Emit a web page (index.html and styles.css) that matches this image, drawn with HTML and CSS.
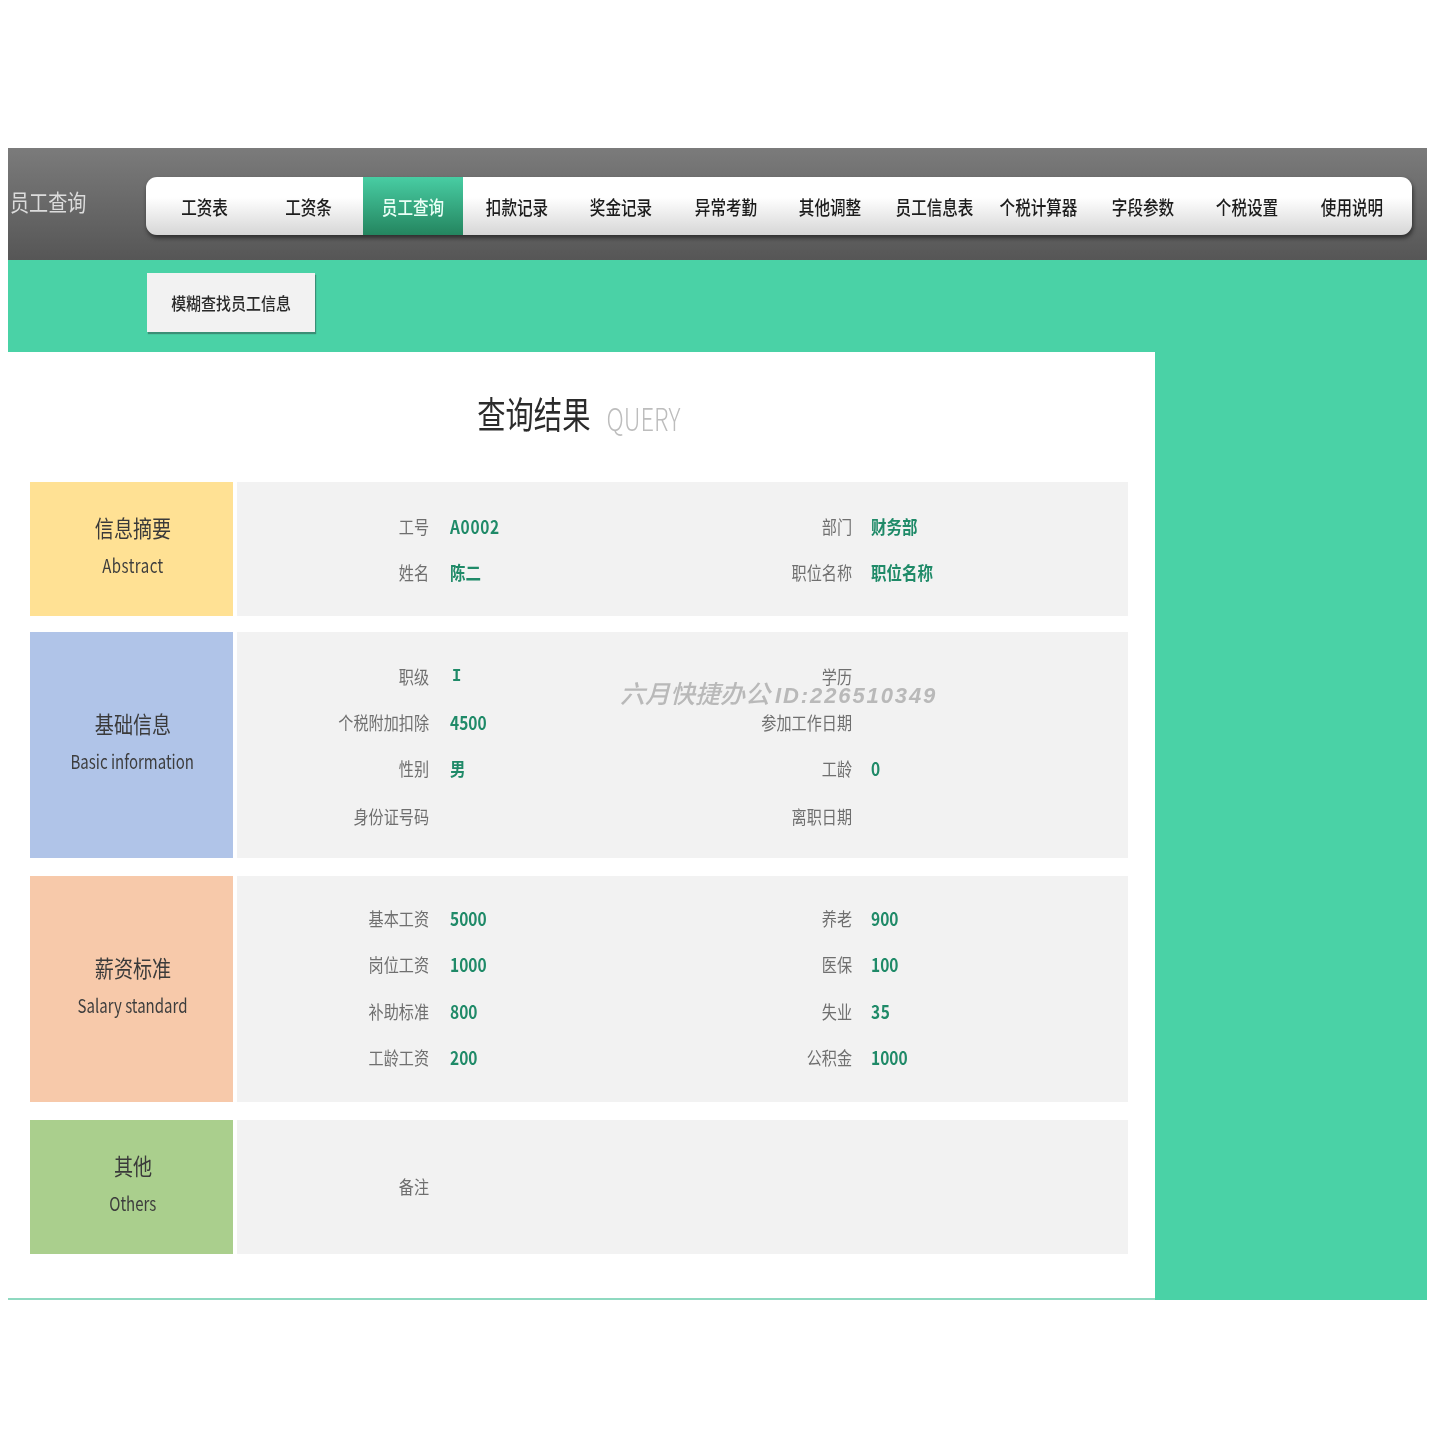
FILE: index.html
```html
<!DOCTYPE html>
<html lang="zh-CN">
<head>
<meta charset="utf-8">
<title>员工查询</title>
<link rel="stylesheet" href="styles.css">
</head>
<body>
<div class="sheet">
  <header class="topbar">
    <div class="page-name"><span>员工查询</span></div>
    <nav class="tabs">
      <a class="tab"><span>工资表</span></a>
      <a class="tab"><span>工资条</span></a>
      <a class="tab active"><span>员工查询</span></a>
      <a class="tab"><span>扣款记录</span></a>
      <a class="tab"><span>奖金记录</span></a>
      <a class="tab"><span>异常考勤</span></a>
      <a class="tab"><span>其他调整</span></a>
      <a class="tab"><span>员工信息表</span></a>
      <a class="tab"><span>个税计算器</span></a>
      <a class="tab"><span>字段参数</span></a>
      <a class="tab"><span>个税设置</span></a>
      <a class="tab"><span>使用说明</span></a>
    </nav>
  </header>
  <div class="toolbar">
    <button class="search-btn"><span>模糊查找员工信息</span></button>
  </div>
  <main class="body-area">
    <section class="panel">
      <h1 class="heading"><span class="heading-inner"><span class="heading-cn">查询结果</span><span class="heading-en">QUERY</span></span></h1>

      <div class="row row-first">
        <div class="side side-yellow"><div class="side-cn"><span>信息摘要</span></div><div class="side-en"><span class="en-loose">Abstract</span></div></div>
        <div class="fields fields-short">
          <div class="k"><span>工号</span></div><div class="v"><span class="wide">A0002</span></div><div class="k"><span>部门</span></div><div class="v v-right"><span>财务部</span></div>
          <div class="k"><span>姓名</span></div><div class="v"><span>陈二</span></div><div class="k"><span>职位名称</span></div><div class="v v-right"><span>职位名称</span></div>
        </div>
      </div>

      <div class="row">
        <div class="side side-blue"><div class="side-cn"><span>基础信息</span></div><div class="side-en"><span>Basic information</span></div></div>
        <div class="fields fields-basic">
          <div class="k"><span>职级</span></div><div class="v"><span class="serif-i">I</span></div><div class="k"><span>学历</span></div><div class="v v-right"></div>
          <div class="k"><span>个税附加扣除</span></div><div class="v"><span>4500</span></div><div class="k"><span>参加工作日期</span></div><div class="v v-right"></div>
          <div class="k"><span>性别</span></div><div class="v"><span>男</span></div><div class="k"><span>工龄</span></div><div class="v v-right"><span>0</span></div>
          <div class="k"><span>身份证号码</span></div><div class="v"></div><div class="k"><span>离职日期</span></div><div class="v v-right"></div>
          <div class="watermark">六月快捷办公<span class="watermark-id">ID:226510349</span></div>
        </div>
      </div>

      <div class="row row-spaced">
        <div class="side side-orange"><div class="side-cn"><span>薪资标准</span></div><div class="side-en"><span>Salary standard</span></div></div>
        <div class="fields fields-salary">
          <div class="k"><span>基本工资</span></div><div class="v"><span>5000</span></div><div class="k"><span>养老</span></div><div class="v v-right"><span>900</span></div>
          <div class="k"><span>岗位工资</span></div><div class="v"><span>1000</span></div><div class="k"><span>医保</span></div><div class="v v-right"><span>100</span></div>
          <div class="k"><span>补助标准</span></div><div class="v"><span>800</span></div><div class="k"><span>失业</span></div><div class="v v-right"><span class="wide">35</span></div>
          <div class="k"><span>工龄工资</span></div><div class="v"><span>200</span></div><div class="k"><span>公积金</span></div><div class="v v-right"><span>1000</span></div>
        </div>
      </div>

      <div class="row row-spaced">
        <div class="side side-green"><div class="side-cn"><span>其他</span></div><div class="side-en"><span>Others</span></div></div>
        <div class="fields fields-short fields-single">
          <div class="k"><span>备注</span></div><div class="v"></div><div class="k"></div><div class="v v-right"></div>
        </div>
      </div>
    </section>
  </main>
</div>
</body>
</html>
```
FILE: styles.css
```css
* { box-sizing: border-box; }
html, body { margin: 0; background: #fff; }
body {
  height: 1440px;
  padding: 148px 0 0 8px;
  font-family: "Noto Sans CJK SC", "Noto Sans", sans-serif;
}
.sheet { width: 1419px; filter: blur(0.45px); }

.topbar {
  height: 112px;
  display: flex;
  align-items: flex-start;
  background: linear-gradient(#7b7b7b, #565656);
}
.page-name {
  width: 138px;
  height: 110px;
  padding: 39px 0 0 2px;
  color: #dcdcdc;
  font-size: 23px;
  line-height: 28px;
  font-weight: 400;
}
.page-name span { display: inline-block; transform: scaleX(.83); transform-origin: left center; }
.tabs {
  margin-top: 29px;
  width: 1266px;
  height: 58px;
  padding: 0 8px 0 6px;
  display: flex;
  border-radius: 11px;
  background: linear-gradient(#fff 0, #fff 35%, #d6d6d6 100%);
  box-shadow: 1px 3px 4px rgba(30, 30, 30, .75);
}
.tab {
  flex: 1 1 0;
  margin: 0 2px;
  display: flex;
  align-items: center;
  justify-content: center;
  white-space: nowrap;
  color: #1c1c1c;
  font-size: 19px;
  font-weight: 500;
}
.tab span { display: inline-block; transform: scaleX(.82); }
.tab.active {
  color: #eafff6;
  background: linear-gradient(#48cda3, #24855f);
}

.toolbar {
  height: 92px;
  padding: 13px 0 0 139px;
  background: #4ad2a6;
}
.search-btn {
  width: 168px;
  height: 59px;
  border: 0;
  padding: 0;
  background: #f2f2f2;
  color: #2a2a2a;
  font-family: inherit;
  font-size: 17px;
  font-weight: 500;
  box-shadow: 1px 2px 1px #3b8f76;
}
.search-btn span { display: inline-block; transform: scaleX(.88); white-space: nowrap; }

.body-area { background: #4ad2a6; height: 948px; }
.panel {
  width: 1147px;
  height: 948px;
  padding: 0 27px 0 22px;
  background: #fff;
  border-bottom: 2px solid #8fd9c0;
}
.heading {
  height: 130px;
  margin: 0;
  padding-bottom: 8px;
  display: flex;
  justify-content: center;
  align-items: center;
  font-weight: 300;
}
.heading-inner {
  display: flex;
  align-items: baseline;
  gap: 21px;
  transform: scaleX(.765);
}
.heading-cn { font-size: 37px; color: #2b2b2b; font-weight: 400; }
.heading-en { font-size: 31px; color: #bdbdbd; font-weight: 300; position: relative; top: 2px; }

.row { display: flex; gap: 4px; margin-top: 16px; }
.row-first { margin-top: 0; }
.row-spaced { margin-top: 18px; }

.side {
  width: 203px;
  padding: 0 0 6px 2px;
  display: flex;
  flex-direction: column;
  justify-content: center;
  align-items: center;
  text-align: center;
}
.side-yellow { background: #ffe194; }
.side-blue { background: #b0c4e8; }
.side-orange { background: #f7c9aa; }
.side-green { background: #aacf8d; }
.side-cn { height: 37px; line-height: 37px; font-size: 23px; color: #3a3a3a; white-space: nowrap; }
.side-en { height: 37px; line-height: 37px; font-size: 19px; font-weight: 400; color: #3d3d3d; white-space: nowrap; }
.side-cn span { display: inline-block; transform: scaleX(.83); }
.side-en span { display: inline-block; transform: scaleX(.79); }
.side-en .en-loose { letter-spacing: .6px; }

.fields {
  position: relative;
  width: 891px;
  display: grid;
  grid-template-columns: 192px 231px 192px 1fr;
  background: #f2f2f2;
}
.fields-short { height: 134px; grid-auto-rows: 46px; padding-top: 22px; }
.fields-single { grid-template-rows: 46px; padding-top: 44px; }
.fields-basic { height: 226px; grid-template-rows: 46px 46px 46px 50px; padding-top: 22px; }
.fields-salary { height: 226px; grid-template-rows: 46px 47px 46px 46px; padding-top: 20px; }

.k, .v { display: flex; align-items: center; padding-bottom: 3px; font-size: 18px; white-space: nowrap; }
.k { justify-content: flex-end; color: #6f6f6f; font-weight: 400; }
.k span { display: inline-block; transform: scaleX(.84); transform-origin: right center; }
.v { padding-left: 21px; color: #1f8a68; font-weight: 700; }
.v-right { padding-left: 19px; }
.v span { display: inline-block; transform: scaleX(.86); transform-origin: left center; }
.v .wide { letter-spacing: .8px; }
.v .serif-i { font-family: "Liberation Mono", monospace; margin-left: 2px; }

.watermark {
  position: absolute;
  left: 383px;
  top: 43px;
  color: #b9b9b9;
  font-size: 25px;
  line-height: 34px;
  font-style: italic;
  font-weight: 500;
  white-space: nowrap;
  font-family: "Noto Sans CJK SC", sans-serif;
}
.watermark-id {
  margin-left: 5px;
  font-family: "Liberation Sans", sans-serif;
  font-size: 22px;
  font-weight: 700;
  letter-spacing: 1.9px;
}
```
